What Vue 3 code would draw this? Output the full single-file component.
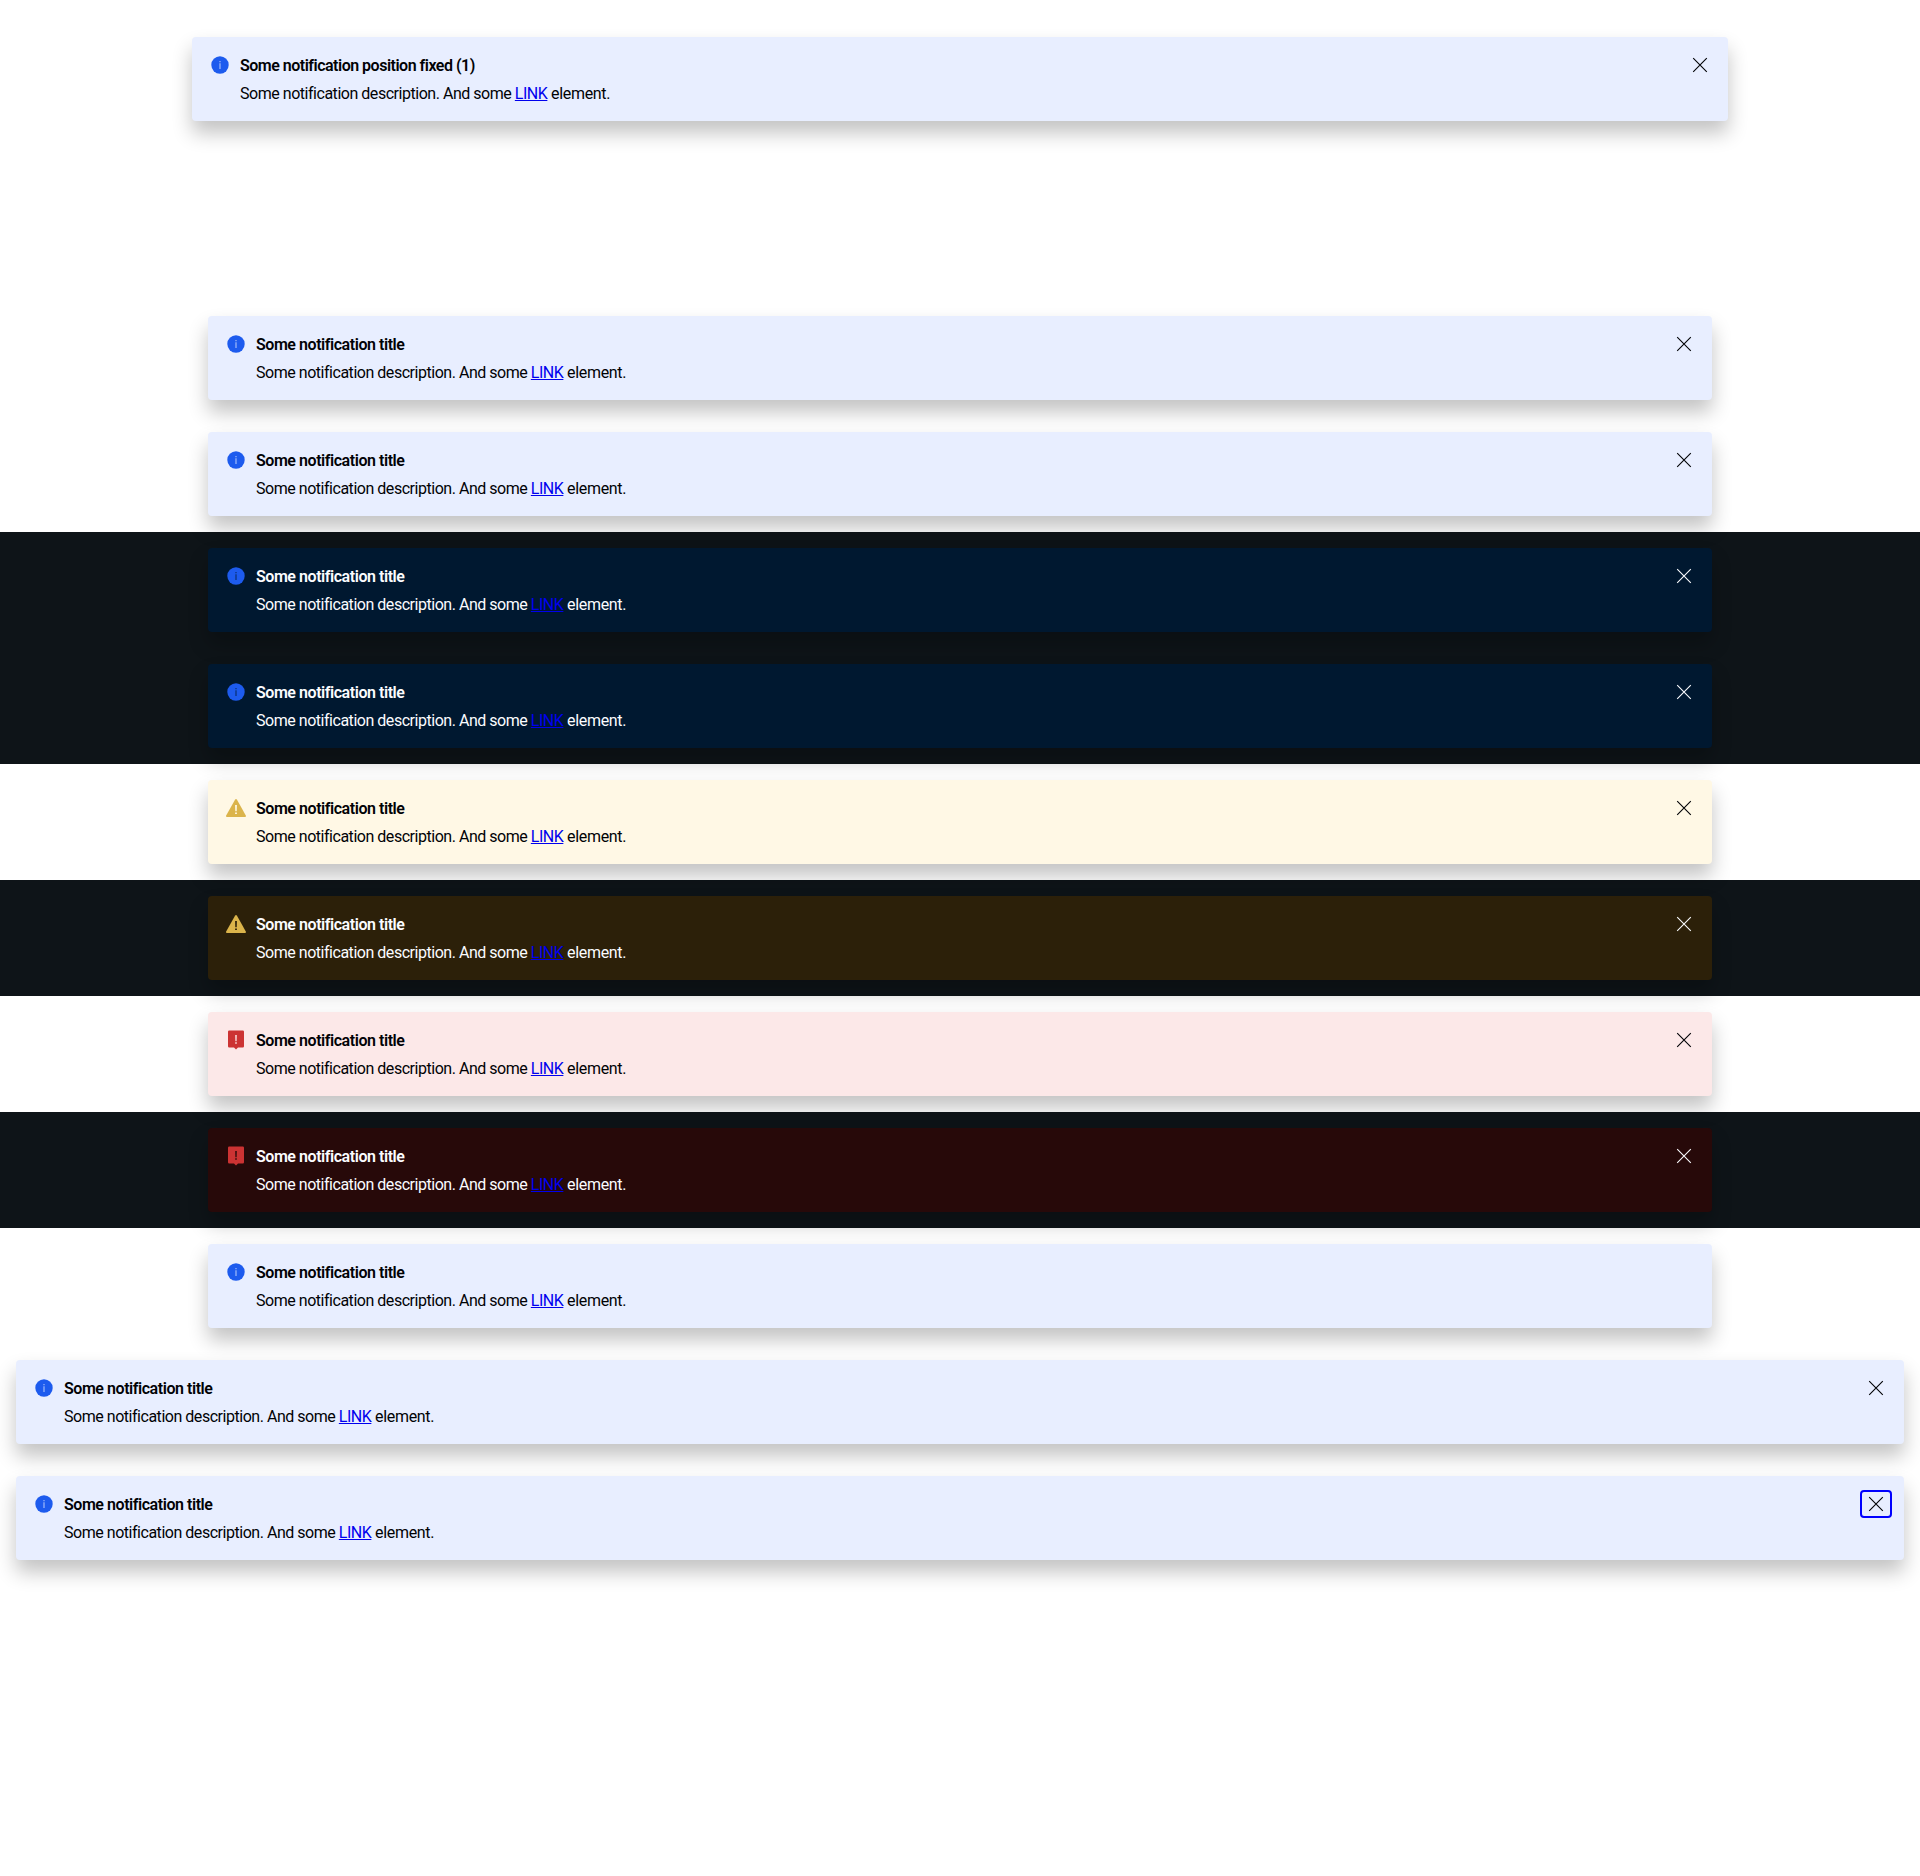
<script setup>
const sections = [
  { fixed: true, items: [{ kind: 'info', title: 'Some notification position fixed (1)' }] },
  { items: [{ kind: 'info' }, { kind: 'info' }] },
  { dark: true, items: [{ kind: 'info' }, { kind: 'info' }] },
  { items: [{ kind: 'warning' }] },
  { dark: true, items: [{ kind: 'warning' }] },
  { items: [{ kind: 'error' }] },
  { dark: true, items: [{ kind: 'error' }] },
  { items: [{ kind: 'info', persistent: true }] },
  { wide: true, items: [{ kind: 'info' }] },
  { wide: true, items: [{ kind: 'info', focused: true }] }
]
</script>

<template>
  <main class="page">
    <section
      v-for="(section, i) in sections"
      :key="i"
      class="section"
      :class="{ dark: section.dark, wide: section.wide, fixed: section.fixed }"
    >
      <div v-for="(item, j) in section.items" :key="j" class="banner" :class="item.kind">
        <svg class="icon" viewBox="0 0 24 24" aria-hidden="true">
          <template v-if="item.kind === 'info'">
            <circle class="shape" cx="12" cy="12" r="8.7" />
            <path class="mark" opacity=".65" d="M11.4 8h1.2v1.2h-1.2zM11.4 10.2h1.2v5.8h-1.2z" />
          </template>
          <template v-else-if="item.kind === 'warning'">
            <path class="shape" d="M11 3.7q1-1.3 2 0L21.8 19.4q.6 1.6-.8 1.6H3q-1.4 0-.8-1.6z" />
            <path class="mark" opacity=".9" d="M11 9h2l-.2 6.3h-1.600zM11 16.400h2v1.700h-2z" />
          </template>
          <template v-else>
            <path class="shape" d="M5.2 2.600h13.600q1.200 0 1.200 1.200v14.400q0 1.200-1.200 1.200h-4.800l-2 2-2-2H5.200q-1.200 0-1.200-1.200V3.800q0-1.200 1.200-1.200z" />
            <path class="mark" opacity=".75" d="M11 7h2l-.2 6.200h-1.600zM11 14.200h2v1.600h-2z" />
          </template>
        </svg>
        <div class="content">
          <h5 class="title">{{ item.title || 'Some notification title' }}</h5>
          <p class="text">Some notification description. And some <a href="#">LINK</a><span class="tail"> element.</span></p>
        </div>
        <button v-if="!item.persistent" class="close" :class="{ focused: item.focused }" type="button" aria-label="Close">
          <svg viewBox="0 0 24 24"><path d="M5.2 5.2l13.6 13.6M18.8 5.2L5.2 18.8" /></svg>
        </button>
      </div>
    </section>
  </main>
</template>

<style>
body {
  margin: 0;
  background: #fff;
}
</style>

<style scoped>
.page {
  min-height: 1876px;
  box-sizing: border-box;
  overflow: hidden;
  font-family: Roboto, "Liberation Sans", sans-serif;
}
.section {
  display: flex;
  flex-direction: column;
  gap: 32px;
  padding: 16px 208px;
  --text: #010205;
}
.section.fixed {
  padding: 37px 192px 179px;
}
.section.wide {
  padding-inline: 16px;
}
.section.dark {
  background: #0e1418;
  --text: #fbfcff;
}
.banner {
  display: flex;
  gap: 8px;
  height: 84px;
  box-sizing: border-box;
  padding: 16px;
  border-radius: 4px;
  color: var(--text);
  background: var(--soft);
  box-shadow: 0 12px 20px rgba(0, 0, 0, .24);
}
.info {
  --soft: #e8eeff;
  --accent: #1d5bee;
}
.warning {
  --soft: #fff8e5;
  --accent: #dbb44b;
}
.error {
  --soft: #fce8e8;
  --accent: #cc3333;
}
.dark .info {
  --soft: #001830;
}
.dark .warning {
  --soft: #2c2009;
}
.dark .error {
  --soft: #270909;
}
.icon {
  flex: none;
  width: 24px;
  height: 24px;
}
.shape {
  fill: var(--accent);
}
.mark {
  fill: var(--soft);
}
.content {
  flex: 1;
  display: flex;
  flex-direction: column;
  gap: 4px;
  padding-top: 1px;
}
.title,
.text {
  margin: 0;
  font-size: 16px;
  line-height: 24px;
  font-weight: 400;
  white-space: nowrap;
}
.title {
  font-weight: 600;
  letter-spacing: -.45px;
}
.fixed .title {
  letter-spacing: -.5px;
}
.text {
  letter-spacing: -.47px;
}
.text a {
  color: #0000ee;
}
.tail {
  letter-spacing: -.32px;
}
.close {
  flex: none;
  display: flex;
  align-items: center;
  justify-content: center;
  width: 32px;
  height: 28px;
  box-sizing: border-box;
  margin: -2px -4px;
  padding: 0;
  border: 2px solid transparent;
  border-radius: 4px;
  background: none;
}
.close.focused {
  border-color: #0000ff;
}
.close svg {
  flex: none;
  width: 24px;
  height: 24px;
  fill: none;
  stroke: var(--text);
  stroke-width: 1.1;
}
</style>
